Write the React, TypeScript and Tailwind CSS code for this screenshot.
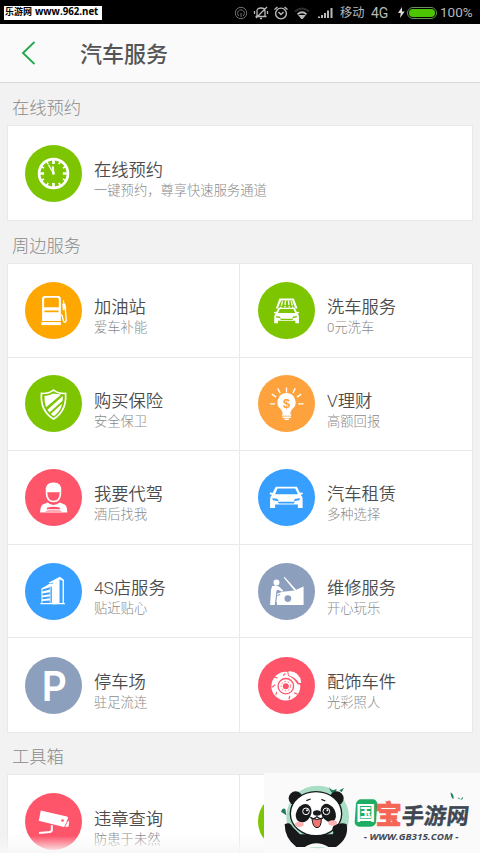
import type { ReactNode } from 'react'

type Service = {
  title: string
  note: string
  color: string
  icon: ReactNode
}

const clockIcon = (
  <>
    <circle cx="85" cy="85" r="43" fill="none" stroke="#fff" strokeWidth="8" />
    <g stroke="#fff" strokeWidth="5">
      <path d="M85 45v12M85 113v12M45 85h12M113 85h12" strokeWidth="8" />
      <path d="M65 50l4 7M105 50l-4 7M50 65l7 4M120 65l-7 4M50 105l7-4M120 105l-7-4M65 120l4-7M105 120l-4-7" />
      <path d="M70 59l15 26" strokeWidth="4" />
      <path d="M83 64l2 21" strokeWidth="6" />
    </g>
    <circle cx="85" cy="85" r="4" fill="#fff" />
  </>
)

const fuelIcon = (
  <g fill="none" stroke="#fff">
    <path
      fill="#fff"
      stroke="none"
      fillRule="evenodd"
      d="M51 50q0-8 8-8h40q8 0 8 8v66H51zM62 47q-5 0-5 5v23h44V52q0-5-5-5zM58 85v5h42v-5z"
    />
    <path d="M49 124h58" strokeWidth="9" />
    <path d="M115 54l1 13" strokeWidth="3" />
    <path d="M111 65l9-1 3 14-10 8z" fill="#fff" stroke="none" />
    <path d="M120 76l3 38q0 6-4 6t-5-6l-3-13q-1-3-4-3" strokeWidth="4" />
  </g>
)

const shieldIcon = (
  <>
    <path
      d="M85 45q15 11 36 10 4 52-36 76-40-24-36-76 21 1 36-10z"
      fill="none"
      stroke="#fff"
      strokeWidth="5"
    />
    <path d="M84 55q-13 7-26 8-1 20 5 33l45-38q-13-1-24-3z" fill="#fff" />
    <path d="M67 104l46-41-1 14-39 35zM77 116l34-31q-2 15-12 26-7 8-14 12z" fill="#fff" />
  </>
)

const carBody = (
  <path
    fillRule="evenodd"
    d="M53 53h63l9 18 7-1q4 3 0 6l-5 1q7 6 6 14v25h-14v-10H51v10H36V91q0-9 6-14l-6-1q-3-4 1-6l7 1zM58 58l-7 17h68l-8-17zM42 87l3 6 17 3-5-7zM126 87l-15 2-5 7 17-3zM59 98l3 5h45l3-5z"
  />
)

const washIcon = (
  <g fill="#fff">
    <path d="M64 49h43l11 30h-7L102 55H69l-10 24h-6z" />
    <path d="M73 58l-5 19M82 56l-2 20M91 56l2 20M99 58l5 19" stroke="#fff" strokeWidth="4" strokeDasharray="13 3" />
    <g transform="translate(21 38) scale(.76 .73)">{carBody}</g>
  </g>
)

const bulbIcon = (
  <>
    <path
      d="M85 54a27 27 0 0 1 17 48q-5 5-6 14H74q-1-9-6-14a27 27 0 0 1 17-48z"
      fill="#fff"
    />
    <path d="M72 119h27M73 126h25M79 132h13" stroke="#fff" strokeWidth="5" />
    <path
      d="M85 37v15M59 40l7 14M111 40l-7 14M41 57l13 9M129 57l-13 9M36 86h15M120 86h16"
      stroke="#fff"
      strokeWidth="4"
    />
    <text
      x="85"
      y="97"
      textAnchor="middle"
      fill="#fda23d"
      fontSize="38"
      fontWeight="700"
      fontFamily="Liberation Sans, sans-serif"
    >
      $
    </text>
  </>
)

const driverIcon = (
  <g fill="#fff">
    <path d="M62 69q-4-29 23-29t23 29q-3 4-5 0H67q-2 4-5 0z" />
    <path d="M64 70q1 27 21 27t21-27" fill="none" stroke="#fff" strokeWidth="5" />
    <path
      fillRule="evenodd"
      d="M67 100l-14 6q-7 4-8 24h81q0-20-8-24l-14-6q-19 14-37 0zM67 115q18-5 36 0l3 5H64zM59 127l9-3h35l8 3z"
    />
  </g>
)

const carIcon = <g fill="#fff">{carBody}</g>

const buildingIcon = (
  <g fill="#fff">
    <path
      fillRule="evenodd"
      d="M70 59l34-18 12 9v69h3v4H46v-4h3V76l23-13 11-1v-3l-8 2zM103 49v70h9V53zM76 69v50h4V71zM52 79v6l22-6v-7zM52 91v6l22-4v-6zM52 102v6l22-3v-5zM52 113v6h22v-7z"
    />
    <path d="M83 66l9-5 3 6v56H82z" />
  </g>
)

const repairIcon = (
  <g fill="#fff">
    <circle cx="55" cy="58" r="9" />
    <path d="M42 69q14-5 23 3l10 10-3 4-13-6q-5 0-5 14l-4 31H36l3-45z" />
    <path d="M79 41l35 39-5 3-32-39z" />
    <path d="M58 91l15-5 36-4 27-12v55H57l-2-11z" />
    <circle cx="89" cy="106" r="10" fill="#8c9fbc" />
    <path d="M58 98l8-5" stroke="#8c9fbc" strokeWidth="3" />
  </g>
)

const parkingIcon = (
  <text
    x="50"
    y="130"
    fill="#fff"
    fontSize="122"
    fontWeight="600"
    fontFamily="Inter, sans-serif"
    textLength="75"
    lengthAdjust="spacingAndGlyphs"
  >
    P
  </text>
)

const brakeIcon = (
  <>
    <circle cx="83" cy="87" r="43" fill="#fff" />
    <path d="M87 39q32-2 43 38-2 8-12 4Q106 62 89 56z" fill="#ff556b" />
    <path d="M92 42q34 3 37 34-2 3-8 1-7-15-29-22-3-7 0-13z" fill="#fff" />
    <g fill="none" stroke="#ff556b">
      <circle cx="83" cy="87" r="23" strokeWidth="4" />
      <circle cx="83" cy="87" r="14" strokeWidth="2.5" strokeDasharray="5 5" />
      <path
        d="M58 63l-11-4M51 83l-9 7M56 104l-3 9M95 116l-3 10M108 107l10 4M75 55l7-6"
        strokeWidth="3.5"
      />
    </g>
    <circle cx="83" cy="87" r="9" fill="#ff556b" />
  </>
)

const cameraIcon = (
  <g fill="#fff">
    <path d="M47 52l78 18q5 2 3 6l-9 22q-1 4-6 3L41 83z" />
    <path d="M132 82l-2 18-10 2 6-15z" />
    <circle cx="112" cy="82" r="4" fill="#ff556b" />
    <path d="M80 96v14q0 5-7 6l-31 3" fill="none" stroke="#fff" strokeWidth="6" />
  </g>
)

const booking: Service = {
  title: '在线预约',
  note: '一键预约，尊享快速服务通道',
  color: '#7cc500',
  icon: clockIcon,
}

const nearby: Service[] = [
  { title: '加油站', note: '爱车补能', color: '#fda700', icon: fuelIcon },
  { title: '洗车服务', note: '0元洗车', color: '#7cc500', icon: washIcon },
  { title: '购买保险', note: '安全保卫', color: '#7cc500', icon: shieldIcon },
  { title: 'V理财', note: '高额回报', color: '#fda23d', icon: bulbIcon },
  { title: '我要代驾', note: '酒后找我', color: '#ff556b', icon: driverIcon },
  { title: '汽车租赁', note: '多种选择', color: '#379fff', icon: carIcon },
  { title: '4S店服务', note: '贴近贴心', color: '#379fff', icon: buildingIcon },
  { title: '维修服务', note: '开心玩乐', color: '#8c9fbc', icon: repairIcon },
  { title: '停车场', note: '驻足流连', color: '#8c9fbc', icon: parkingIcon },
  { title: '配饰车件', note: '光彩照人', color: '#ff556b', icon: brakeIcon },
]

const tool: Service = {
  title: '违章查询',
  note: '防患于未然',
  color: '#ff556b',
  icon: cameraIcon,
}

function ServiceItem({ service }: { service: Service }) {
  return (
    <div className="flex h-full items-center">
      <svg viewBox="0 0 170 170" className="size-[57px] shrink-0">
        <circle cx="85" cy="85" r="85" fill={service.color} />
        {service.icon}
      </svg>
      <div className="ml-3 whitespace-nowrap pt-[13px]">
        <p className="text-[17.3px] font-[350] leading-[22px] text-[#4c4c4c]">{service.title}</p>
        <p className="text-[13.3px] font-light leading-[19px] text-[#8a8a8a]">{service.note}</p>
      </div>
    </div>
  )
}

function SectionTitle({ children }: { children: ReactNode }) {
  return <h2 className="pl-[5px] pt-px text-[17.3px] font-light leading-[23px] text-[#8a8a8a]">{children}</h2>
}

function StatusBar() {
  return (
    <div className="flex h-[24px] items-center bg-black pl-1 pt-px text-[#b9b9b9]">
      <div className="flex h-[14px] w-[98px] items-center whitespace-nowrap bg-white pl-px text-black">
        <span className="text-[9px] font-bold">乐游网</span>
        <span className="ml-[3px] font-['Open_Sans'] text-[9.7px] font-bold">www.962.net</span>
      </div>
      <svg viewBox="0 0 14 14" className="ml-[132px] size-[14px] opacity-60" fill="none" stroke="currentColor">
        <circle cx="7" cy="7" r="5.7" />
        <path d="M5 10a3.4 3.4 0 1 1 4 0M7 7v4" />
      </svg>
      <svg viewBox="0 0 16 14" className="ml-[5px] h-[14px] w-4" fill="none" stroke="currentColor" strokeWidth="1.3">
        <path d="M4 10V5q0-3 4-3t4 3v5M2.5 10.5h11M7 12.5h2M14 1L3 12M1.5 5v3M14.5 5v3" />
      </svg>
      <svg viewBox="0 0 14 14" className="ml-[5px] size-[14px]" fill="none" stroke="currentColor" strokeWidth="1.4">
        <circle cx="7" cy="7.5" r="5.4" />
        <path d="M4.5 6L7 8.5 9.5 6M.5 3.5L3.5 1M13.5 3.5L10.5 1" />
      </svg>
      <svg viewBox="0 0 16 12" className="ml-[6px] h-3 w-4" fill="none" stroke="currentColor" strokeWidth="1.8">
        <path d="M1 4.5q7-6 14 0" opacity=".25" />
        <path d="M3.5 7.3q4.5-4 9 0" />
        <path d="M6 9h4l-2 2.5z" fill="currentColor" />
      </svg>
      <svg viewBox="0 0 15 12" className="ml-[8px] h-3 w-[15px]" fill="currentColor">
        <path d="M0 9.5h2V11H0zM3 8h2v3H3zM6 6h2v5H6zM9 3.5h2V11H9zM12.5 1h2v10h-2z" />
      </svg>
      <span className="ml-[7px] w-[31px] pt-px text-[12.2px] leading-none">移动</span>
      <span className="w-[27px] pt-px font-[Roboto] text-[14px] leading-none">4G</span>
      <svg viewBox="0 0 7 11" className="h-[11px] w-[7px]" fill="#ddd">
        <path d="M4 0L0 6h2.7L2 11l4.7-6.500H4z" />
      </svg>
      <div className="ml-[2px] h-[12px] w-[30px] rounded-full border border-[#6b8f58] p-px">
        <div className="h-full rounded-full bg-[#4dc400]" />
      </div>
      <span className="ml-[3px] font-[Roboto] text-[13.5px] leading-none">100%</span>
    </div>
  )
}

function PandaBadge() {
  return (
    <div className="absolute bottom-0 right-0 h-[80px] w-[216px] bg-[#fafafa]">
      <svg viewBox="42 24 648 240" className="size-full">
        <circle cx="203" cy="156" r="94" fill="#a9ddc5" />
        <path d="M106 132q-9-5-13 8l16 11zM237 65q4 21 19 23l4-17q-15 11-23-6zM268 76l7 6 7-13" fill="#237a61" />
        <g fill="#17191b">
          <circle cx="137" cy="100" r="21" />
          <circle cx="260" cy="100" r="21" />
          <path d="M104 178q16-10 24 8l22 22h98l8-16q10-24 34-14 8 42-32 68H139q-35-26-35-68z" />
        </g>
        <ellipse cx="198" cy="146" rx="77" ry="66" fill="#fff" stroke="#17191b" strokeWidth="4" />
        <path d="M163 247q36-24 74 0z" fill="#fafafa" />
        <g fill="#17191b">
          <circle cx="263" cy="193" r="16" />
          <ellipse cx="161" cy="145" rx="22" ry="29" transform="rotate(28 161 145)" />
          <ellipse cx="235" cy="144" rx="21" ry="29" transform="rotate(-28 235 144)" />
          <ellipse cx="201" cy="144" rx="12" ry="8" />
        </g>
        <g fill="#17191b" stroke="#fff" strokeWidth="3">
          <circle cx="168" cy="139" r="10" />
          <circle cx="229" cy="139" r="10" />
        </g>
        <circle cx="171" cy="136" r="3" fill="#fff" />
        <circle cx="232" cy="136" r="3" fill="#fff" />
        <path d="M169 107l13-5M214 103l12 5M181 157q10 9 20-2 10 11 20 2" fill="none" stroke="#17191b" strokeWidth="4" />
        <path d="M186 161q15 5 28 0 0 27-13 27-13-1-15-27z" fill="#ef756f" stroke="#17191b" strokeWidth="3" />
        <ellipse cx="148" cy="178" rx="13" ry="8" fill="#ffb2b2" />
        <ellipse cx="248" cy="174" rx="13" ry="8" fill="#ffb2b2" />
        <g fontFamily="Noto Sans CJK SC, sans-serif" fontWeight="900">
          <rect x="318" y="103" width="64" height="82" rx="15" fill="#1dae64" transform="skewX(-4) translate(8 0)" />
          <text x="318" y="166" fontSize="58" fontWeight="700" fill="#fff">国</text>
          <text x="376" y="176" fontSize="80" fill="#f46556" stroke="#f46556" strokeWidth="2">宝</text>
          <text
            transform="translate(473 176) skewX(-7)"
            x="-20"
            fontSize="67"
            fontWeight="700"
            fill="#3e4752"
            stroke="#3e4752"
            strokeWidth="1"
          >
            手游网
          </text>
        </g>
        <path d="M602 82q-1 14 8 21 4-12-8-21zM622 96q3 8 9 6zM631 104l8-9-1 8z" fill="#248465" />
        <text
          x="341"
          y="224"
          fontSize="27"
          fontStyle="italic"
          fontWeight="700"
          fill="#404954"
          fontFamily="Open Sans, sans-serif"
          textLength="284"
          lengthAdjust="spacingAndGlyphs"
        >
          - WWW.GB315.COM -
        </text>
      </svg>
    </div>
  )
}

export default function App() {
  return (
    <div className="relative h-[853px] w-[480px] overflow-hidden bg-[#f2f2f2] font-[Roboto,'Noto_Sans_CJK_SC',sans-serif]">
      <StatusBar />
      <header className="flex h-[59px] items-center border-b border-[#d9d9d9] bg-[#fafafa] pl-[21px]">
        <svg viewBox="0 0 14 24" className="h-6 w-[14px]" fill="none" stroke="#21a74b" strokeWidth="1.9">
          <path d="M13.5 1L2 12l11.5 11" />
        </svg>
        <h1 className="ml-[45px] pt-[2px] text-[22px] font-medium text-[#555]">汽车服务</h1>
      </header>

      <main className="px-[7px] pt-[13px]">
        <SectionTitle>在线预约</SectionTitle>
        <div className="mt-[5px] h-[96px] border border-[#e9e9e9] bg-white pl-[17px]">
          <ServiceItem service={booking} />
        </div>

        <div className="mt-[13px]">
          <SectionTitle>周边服务</SectionTitle>
        </div>
        <div className="mt-[5px] grid h-[470px] grid-cols-2 grid-rows-5 border border-[#e9e9e9] bg-white">
          {nearby.map((service, i) => (
            <div
              key={service.title}
              className={`border-[#e9e9e9] ${i % 2 === 0 ? 'border-r pl-[17px]' : 'pl-[18px]'} ${i < 8 ? 'border-b' : ''}`}
            >
              <ServiceItem service={service} />
            </div>
          ))}
        </div>

        <div className="mt-[12px]">
          <SectionTitle>工具箱</SectionTitle>
        </div>
        <div className="mt-[5px] grid h-[95px] grid-cols-2 border border-[#e9e9e9] bg-white">
          <div className="border-r border-[#e9e9e9] pl-[17px]">
            <ServiceItem service={tool} />
          </div>
          <div className="flex items-center pl-[18px]">
            <div className="size-[57px] rounded-full bg-[#7cc500]" />
          </div>
        </div>
      </main>

      <div className="absolute bottom-0 left-0 h-[17px] w-full bg-gradient-to-b from-transparent to-[#f7f7f7]" />
      <PandaBadge />
    </div>
  )
}
